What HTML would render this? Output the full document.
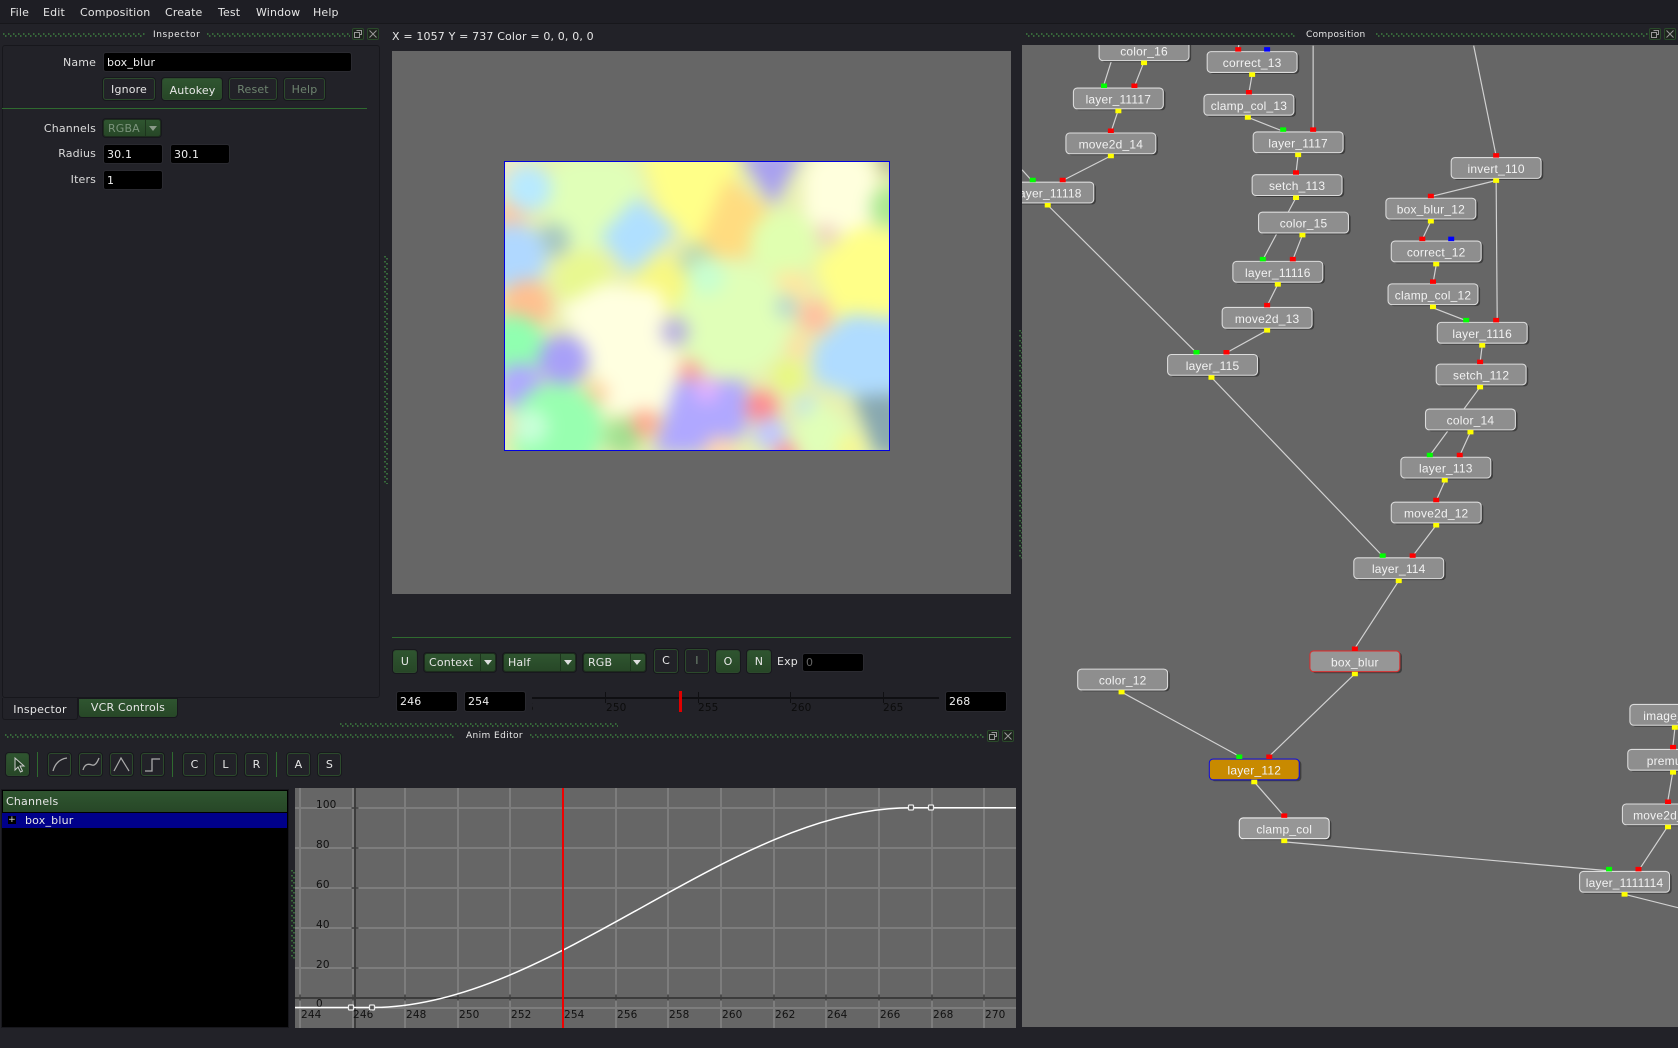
<!DOCTYPE html>
<html><head><meta charset="utf-8"><title>Composition</title>
<style>
html,body{margin:0;padding:0;background:#222228;width:1678px;height:1048px;overflow:hidden}
body{position:relative;font-family:"DejaVu Sans",sans-serif;font-size:11px;color:#e6e6e6;letter-spacing:.15px}
div{box-sizing:border-box}
.a{position:absolute;white-space:nowrap}
.t{position:absolute;white-space:nowrap;line-height:14px}
.r{position:absolute;white-space:nowrap;line-height:14px;text-align:right;width:90px;left:6px;color:#dcdcdc}
.in{position:absolute;background:#000;border:1px solid #2a2a30;border-radius:3px;padding-left:3px;color:#eee;white-space:nowrap}
.b{position:absolute;border:1px solid #2c4a2c;border-radius:3px;text-align:center;background:#222228;box-shadow:0 0 0 1px #18181d;white-space:nowrap}
.g{background:linear-gradient(#2f5530,#274727);color:#e8e8e8}
.c{position:absolute;border-radius:3px;background:linear-gradient(#2f5530,#274727);border:1px solid #1c2c1c;box-shadow:0 0 0 1px #18181d;padding-left:4px;white-space:nowrap}
.c i{position:absolute;top:0;bottom:0;width:1px;background:#1d351d}
.c b{position:absolute;width:0;height:0;border-left:4px solid transparent;border-right:4px solid transparent;border-top:5px solid #ddd}
.d{position:absolute;height:4px;background:linear-gradient(90deg,#37683a 1.500px,transparent 1.500px) 0 0/5px 1.500px repeat-x,linear-gradient(90deg,#37683a 1.500px,transparent 1.500px) 2px 2px/5px 1.500px repeat-x}
.v{position:absolute;width:4px;background:linear-gradient(#37683a 1.500px,transparent 1.500px) 0 0/1.500px 5px repeat-y,linear-gradient(#37683a 1.500px,transparent 1.500px) 2px 2px/1.500px 5px repeat-y}
.ti{position:absolute;font-size:9px;letter-spacing:.4px;line-height:12px;color:#e8e8e8;white-space:nowrap}
.w{position:absolute;width:12px;height:12px;border:1px solid #2a4a2a;border-radius:2px;background:#1d231d}
.w svg{position:absolute;left:0;top:0}
.sp{position:absolute;width:1px;height:25px;background:#2f6a2f}
svg text{font-family:"Liberation Sans",sans-serif}
</style></head><body>

<!-- menu -->
<div class="a" style="left:0;top:0;width:1678px;height:24px;background:#1e1e24;border-bottom:1px solid #17171b"></div>
<div class="t" style="left:10px;top:6px">File</div>
<div class="t" style="left:43px;top:6px">Edit</div>
<div class="t" style="left:80px;top:6px">Composition</div>
<div class="t" style="left:165px;top:6px">Create</div>
<div class="t" style="left:218px;top:6px">Test</div>
<div class="t" style="left:256px;top:6px">Window</div>
<div class="t" style="left:313px;top:6px">Help</div>

<!-- inspector -->
<div class="d" style="left:3px;top:33px;width:142px"></div>
<div class="ti" style="left:153px;top:29px;letter-spacing:.6px">Inspector</div>
<div class="d" style="left:207px;top:33px;width:143px"></div>
<div class="w" style="left:352px;top:28px"><svg width="10" height="10"><path d="M3.500 1.500h5v4h-2M1.500 3.500h5v5h-5z" fill="none" stroke="#999"/></svg></div>
<div class="w" style="left:367px;top:28px"><svg width="10" height="10"><path d="M1.500 1.500l7 7M8.500 1.500l-7 7" fill="none" stroke="#999"/></svg></div>
<div class="a" style="left:2px;top:45px;width:378px;height:653px;border:1px solid #17171c;border-radius:3px"></div>

<div class="r" style="top:56px">Name</div>
<div class="in" style="left:103px;top:52px;width:249px;height:20px;line-height:20px">box_blur</div>
<div class="b" style="left:103px;top:78px;width:52px;height:22px;line-height:22px">Ignore</div>
<div class="b g" style="left:162px;top:78px;width:60px;height:22px;line-height:23px;padding-left:1px">Autokey</div>
<div class="b" style="left:229px;top:78px;width:48px;height:22px;line-height:22px;color:#6f8570">Reset</div>
<div class="b" style="left:284px;top:78px;width:41px;height:22px;line-height:22px;color:#6f8570">Help</div>
<div class="a" style="left:2px;top:108px;width:365px;height:1px;background:#2f6a2f"></div>

<div class="r" style="top:122px">Channels</div>
<div class="c" style="left:103px;top:119px;width:58px;height:18px;line-height:17px;color:#7b947c">RGBA<i style="left:41px"></i><b style="left:45px;top:6px;border-top-color:#8a9a8a"></b></div>
<div class="r" style="top:147px">Radius</div>
<div class="in" style="left:103px;top:144px;width:60px;height:20px;line-height:20px">30.1</div>
<div class="in" style="left:170px;top:144px;width:60px;height:20px;line-height:20px">30.1</div>
<div class="r" style="top:173px">Iters</div>
<div class="in" style="left:103px;top:170px;width:60px;height:20px;line-height:20px">1</div>

<div class="a" style="left:2px;top:698px;width:76px;height:22px;border:1px solid #17171c;border-top:0;border-radius:0 0 3px 3px;text-align:center;line-height:23px;letter-spacing:.25px">Inspector</div>
<div class="a" style="left:79px;top:699px;width:98px;height:18px;background:linear-gradient(#2f5530,#274727);border-radius:0 0 3px 3px;text-align:center;line-height:18px;letter-spacing:.2px;box-shadow:0 0 0 1px #18181d">VCR Controls</div>

<div class="v" style="left:384px;top:256px;height:228px"></div>
<div class="v" style="left:1019px;top:330px;height:230px"></div>
<div class="d" style="left:340px;top:723px;width:278px"></div>

<!-- viewer -->
<div class="t" style="left:392px;top:30px">X = 1057 Y = 737 Color = 0, 0, 0, 0</div>
<div class="a" style="left:392px;top:51px;width:619px;height:543px;background:#666"></div>
<svg class="a" style="left:504px;top:161px;border:0" width="386" height="290" viewBox="42 33 1158 870">
<defs><filter id="bl" x="-10%" y="-10%" width="120%" height="120%" color-interpolation-filters="sRGB"><feGaussianBlur stdDeviation="26"/></filter></defs>
<g filter="url(#bl)">
<rect x="-50" y="-50" width="1350" height="1050" fill="#e8f0b0"/>
<circle cx="60" cy="60" r="70" fill="#f0e8c0"/>
<circle cx="60" cy="200" r="50" fill="#ffc8a0"/>
<rect x="170" y="20" width="290" height="280" rx="100" fill="#e0ffb8"/>
<circle cx="115" cy="115" r="70" fill="#b8eaff"/>
<path d="M450 0H750L730 150L630 290L510 180Z" fill="#ffff88"/>
<path d="M710 80L850 190L770 320H630L630 270Z" fill="#ffdc80"/>
<path d="M740 0H940L850 170Z" fill="#a8a0f0"/>
<rect x="940" y="0" width="220" height="250" rx="90" fill="#ffffdd"/>
<circle cx="1200" cy="170" r="60" fill="#aae890"/>
<path d="M1160 0H1230V70H1180Z" fill="#b0b090"/>
<path d="M330 260L440 140L560 240L420 370Z" fill="#b0e0ff"/>
<circle cx="620" cy="330" r="50" fill="#bcd8b0"/>
<circle cx="190" cy="270" r="50" fill="#a8c8c0"/>
<circle cx="70" cy="320" r="100" fill="#b0d8ff"/>
<circle cx="880" cy="280" r="100" fill="#e0ffb0"/>
<circle cx="1010" cy="250" r="30" fill="#f0d0c0"/>
<path d="M970 350L1100 230L1240 250V500H1040Z" fill="#ffff88"/>
<circle cx="900" cy="420" r="60" fill="#ffe8a0"/>
<circle cx="110" cy="465" r="75" fill="#ffc090"/>
<circle cx="280" cy="390" r="85" fill="#e8f890"/>
<path d="M390 420L530 310L600 400L520 510L420 530Z" fill="#f8f880"/>
<circle cx="730" cy="510" r="170" fill="#e0ffb8"/>
<circle cx="650" cy="380" r="55" fill="#c8ffd0"/>
<circle cx="890" cy="470" r="35" fill="#b8d8d0"/>
<circle cx="975" cy="500" r="50" fill="#ffc0a0"/>
<circle cx="925" cy="590" r="35" fill="#ffe0a0"/>
<path d="M210 470L340 400L510 420L570 640L530 790L340 790L300 640Z" fill="#ffffe0"/>
<circle cx="555" cy="545" r="42" fill="#b8b0e0"/>
<circle cx="600" cy="665" r="32" fill="#ff9898"/>
<circle cx="70" cy="590" r="95" fill="#90ffb0"/>
<circle cx="220" cy="630" r="75" fill="#a8a0f8"/>
<circle cx="90" cy="710" r="70" fill="#b0a8ff"/>
<circle cx="320" cy="730" r="35" fill="#ffd0a0"/>
<circle cx="200" cy="840" r="140" fill="#98ffb0"/>
<circle cx="120" cy="830" r="55" fill="#c8ffd8"/>
<circle cx="40" cy="830" r="35" fill="#f0e0b0"/>
<circle cx="400" cy="860" r="55" fill="#a0e090"/>
<circle cx="465" cy="820" r="42" fill="#ffa890"/>
<path d="M560 690H770V850L640 910H490Z" fill="#b0a8ff"/>
<circle cx="650" cy="720" r="40" fill="#e0b0ff"/>
<circle cx="815" cy="770" r="48" fill="#ff8890"/>
<circle cx="690" cy="910" r="50" fill="#ffd8b0"/>
<circle cx="840" cy="850" r="50" fill="#c0c8ff"/>
<circle cx="890" cy="915" r="35" fill="#ff8898"/>
<circle cx="895" cy="680" r="48" fill="#e8f880"/>
<circle cx="950" cy="770" r="40" fill="#c8e8e0"/>
<path d="M970 590L1080 490L1240 510V740L1100 740L970 690Z" fill="#b0dcff"/>
<path d="M1090 740L1240 730V920H1160Z" fill="#88a8b0"/>
<path d="M910 840L990 750L1100 850L1140 930H920Z" fill="#e0ffb8"/>
<circle cx="1080" cy="895" r="40" fill="#f8f890"/>
</g>
</svg>
<div class="a" style="left:504px;top:161px;width:386px;height:290px;border:1px solid #0000e0"></div>

<!-- viewer controls -->
<div class="a" style="left:392px;top:637px;width:619px;height:1px;background:#2f6a2f"></div>
<div class="b g" style="left:393px;top:650px;width:24px;height:23px;line-height:22px">U</div>
<div class="c" style="left:424px;top:653px;width:72px;height:19px;line-height:18px">Context<i style="left:55px"></i><b style="left:59px;top:6px"></b></div>
<div class="c" style="left:503px;top:653px;width:73px;height:19px;line-height:18px">Half<i style="left:56px"></i><b style="left:60px;top:6px"></b></div>
<div class="c" style="left:583px;top:653px;width:63px;height:19px;line-height:18px">RGB<i style="left:46px"></i><b style="left:49px;top:6px"></b></div>
<div class="b" style="left:654px;top:649px;width:24px;height:24px;line-height:21px">C</div>
<div class="b" style="left:685px;top:649px;width:24px;height:24px;line-height:22px;color:#6f8570">I</div>
<div class="b g" style="left:716px;top:650px;width:24px;height:23px;line-height:22px">O</div>
<div class="b g" style="left:747px;top:650px;width:24px;height:23px;line-height:22px">N</div>
<div class="t" style="left:777px;top:655px">Exp</div>
<div class="in" style="left:802px;top:653px;width:62px;height:19px;line-height:18px;color:#666">0</div>

<div class="in" style="left:396px;top:691px;width:62px;height:21px;line-height:20px">246</div>
<div class="in" style="left:464px;top:691px;width:62px;height:21px;line-height:20px">254</div>
<div class="in" style="left:945px;top:691px;width:62px;height:21px;line-height:20px">268</div>
<div class="a" style="left:532px;top:681px;width:408px;height:40px;overflow:hidden">
  <div class="a" style="left:0;top:16px;width:407px;height:2px;background:#0f0f12"></div>
  <div class="a" style="left:73px;top:11px;width:1px;height:11px;background:#0f0f12"></div>
  <div class="a" style="left:166px;top:11px;width:1px;height:11px;background:#0f0f12"></div>
  <div class="a" style="left:258px;top:11px;width:1px;height:11px;background:#0f0f12"></div>
  <div class="a" style="left:351px;top:11px;width:1px;height:11px;background:#0f0f12"></div>
  <div class="t" style="left:-5px;top:20px;color:#0c0c0c;font-size:10.500px">5</div>
  <div class="t" style="left:74px;top:20px;color:#0c0c0c;font-size:10.500px">250</div>
  <div class="t" style="left:166px;top:20px;color:#0c0c0c;font-size:10.500px">255</div>
  <div class="t" style="left:259px;top:20px;color:#0c0c0c;font-size:10.500px">260</div>
  <div class="t" style="left:351px;top:20px;color:#0c0c0c;font-size:10.500px">265</div>
</div>
<div class="a" style="left:679px;top:691px;width:3px;height:21px;background:#e00000"></div>

<!-- anim editor header -->
<div class="d" style="left:5px;top:734px;width:450px"></div>
<div class="ti" style="left:466px;top:730px">Anim Editor</div>
<div class="d" style="left:530px;top:734px;width:455px"></div>
<div class="w" style="left:987px;top:730px"><svg width="10" height="10"><path d="M3.500 1.500h5v4h-2M1.500 3.500h5v5h-5z" fill="none" stroke="#999"/></svg></div>
<div class="w" style="left:1002px;top:730px"><svg width="10" height="10"><path d="M1.500 1.500l7 7M8.500 1.500l-7 7" fill="none" stroke="#999"/></svg></div>

<!-- anim toolbar -->
<div class="b g" style="left:6px;top:753px;width:23px;height:23px"><svg width="21" height="21" style="position:absolute;left:0;top:0"><path d="M8 4v12l3-3 2.500 5 2-1-2.500-5h4z" fill="#1e3a20" stroke="#ccc"/></svg></div>
<div class="sp" style="left:37px;top:752px"></div>
<div class="b" style="left:48px;top:753px;width:23px;height:23px"><svg width="21" height="21" style="position:absolute;left:0;top:0"><path d="M4 17C6 10 10 5 18 4" fill="none" stroke="#aaa" stroke-width="1.300"/></svg></div>
<div class="b" style="left:79px;top:753px;width:23px;height:23px"><svg width="21" height="21" style="position:absolute;left:0;top:0"><path d="M3 16C5 9 9 10 12 11S17 9 19 4" fill="none" stroke="#aaa" stroke-width="1.300"/></svg></div>
<div class="b" style="left:110px;top:753px;width:23px;height:23px"><svg width="21" height="21" style="position:absolute;left:0;top:0"><path d="M3 17L10 4L18 17" fill="none" stroke="#aaa" stroke-width="1.200"/></svg></div>
<div class="b" style="left:141px;top:753px;width:23px;height:23px"><svg width="21" height="21" style="position:absolute;left:0;top:0"><path d="M3 17H10V5H18" fill="none" stroke="#aaa" stroke-width="1.300"/></svg></div>
<div class="sp" style="left:172px;top:752px"></div>
<div class="b" style="left:183px;top:753px;width:23px;height:23px;line-height:21px">C</div>
<div class="b" style="left:214px;top:753px;width:23px;height:23px;line-height:21px">L</div>
<div class="b" style="left:245px;top:753px;width:23px;height:23px;line-height:21px">R</div>
<div class="sp" style="left:276px;top:752px"></div>
<div class="b" style="left:287px;top:753px;width:23px;height:23px;line-height:21px">A</div>
<div class="b" style="left:318px;top:753px;width:23px;height:23px;line-height:21px">S</div>

<!-- channels -->
<div class="a" style="left:2px;top:790px;width:286px;height:237px;background:#000;box-shadow:0 0 0 1px #17171c"></div>
<div class="a" style="left:3px;top:791px;width:284px;height:21px;background:linear-gradient(#2f5530,#274727);line-height:21px;padding-left:3px;letter-spacing:.2px">Channels</div>
<div class="a" style="left:2px;top:813px;width:285px;height:15px;background:#00008a;line-height:15px;padding-left:23px;letter-spacing:.2px">box_blur</div>
<div class="a" style="left:8px;top:816px;width:8px;height:8px;background:#000;color:#ddd;font-size:9px;line-height:8px;text-align:center">+</div>
<div class="v" style="left:291px;top:870px;height:90px"></div>

<!-- graph -->
<svg class="a" style="left:295px;top:788px" width="721" height="240" viewBox="295 788 721 240">
<rect x="295" y="788" width="721" height="240" fill="#666"/>
<path d="M300 788V1028M353 788V1028M405 788V1028M458 788V1028M510 788V1028M563 788V1028M616 788V1028M668 788V1028M721 788V1028M774 788V1028M826 788V1028M879 788V1028M932 788V1028M984 788V1028M295 808H1016M295 848H1016M295 888H1016M295 928H1016M295 968H1016M295 1008H1016" stroke="#7d7d7d" stroke-width="2" fill="none"/>
<path d="M295 998H1016M355 788V1028" stroke="#3c3c3c" stroke-width="2" fill="none"/>
<path d="M351.500 808h7M351.500 848h7M351.500 888h7M351.500 928h7M351.500 968h7M300 994.500v6M353 994.500v6M405 994.500v6M458 994.500v6M510 994.500v6M563 994.500v6M616 994.500v6M668 994.500v6M721 994.500v6M774 994.500v6M826 994.500v6M879 994.500v6M932 994.500v6M984 994.500v6" stroke="#3c3c3c" stroke-width="1.500" fill="none"/>
<g font-size="10.500" fill="#111">
<text x="316" y="808" style="font-family:'DejaVu Sans',sans-serif">100</text>
<text x="316" y="848" style="font-family:'DejaVu Sans',sans-serif">80</text>
<text x="316" y="888" style="font-family:'DejaVu Sans',sans-serif">60</text>
<text x="316" y="928" style="font-family:'DejaVu Sans',sans-serif">40</text>
<text x="316" y="968" style="font-family:'DejaVu Sans',sans-serif">20</text>
<text x="316" y="1007" style="font-family:'DejaVu Sans',sans-serif">0</text>
<text x="301" y="1018" style="font-family:'DejaVu Sans',sans-serif">244</text>
<text x="353" y="1018" style="font-family:'DejaVu Sans',sans-serif">246</text>
<text x="406" y="1018" style="font-family:'DejaVu Sans',sans-serif">248</text>
<text x="459" y="1018" style="font-family:'DejaVu Sans',sans-serif">250</text>
<text x="511" y="1018" style="font-family:'DejaVu Sans',sans-serif">252</text>
<text x="564" y="1018" style="font-family:'DejaVu Sans',sans-serif">254</text>
<text x="617" y="1018" style="font-family:'DejaVu Sans',sans-serif">256</text>
<text x="669" y="1018" style="font-family:'DejaVu Sans',sans-serif">258</text>
<text x="722" y="1018" style="font-family:'DejaVu Sans',sans-serif">260</text>
<text x="775" y="1018" style="font-family:'DejaVu Sans',sans-serif">262</text>
<text x="827" y="1018" style="font-family:'DejaVu Sans',sans-serif">264</text>
<text x="880" y="1018" style="font-family:'DejaVu Sans',sans-serif">266</text>
<text x="933" y="1018" style="font-family:'DejaVu Sans',sans-serif">268</text>
<text x="985" y="1018" style="font-family:'DejaVu Sans',sans-serif">270</text>
</g>
<path d="M295 1007.500H372C552 1007.500 731 807.700 911 807.700H1016" fill="none" stroke="#fff" stroke-width="1.500"/>
<rect x="562" y="788" width="2" height="240" fill="#f00000"/>
<g fill="#555" stroke="#e8e8e8" stroke-width="1.300">
<rect x="348.500" y="1005" width="5" height="5" rx="1"/>
<rect x="369.500" y="1005" width="5" height="5" rx="1"/>
<rect x="908.500" y="805" width="5" height="5" rx="1"/>
<rect x="928.500" y="805" width="5" height="5" rx="1"/>
</g>
</svg>

<!-- composition -->
<div class="d" style="left:1026px;top:33px;width:269px"></div>
<div class="ti" style="left:1306px;top:29px;letter-spacing:.3px">Composition</div>
<div class="d" style="left:1376px;top:33px;width:272px"></div>
<div class="w" style="left:1649px;top:28px"><svg width="10" height="10"><path d="M3.500 1.500h5v4h-2M1.500 3.500h5v5h-5z" fill="none" stroke="#999"/></svg></div>
<div class="w" style="left:1664px;top:28px"><svg width="10" height="10"><path d="M1.500 1.500l7 7M8.500 1.500l-7 7" fill="none" stroke="#999"/></svg></div>

<div class="a" style="left:1022px;top:45px;width:656px;height:982px;background:#666;overflow:hidden">
<svg width="656" height="982" style="position:absolute;left:0;top:0">
<defs>
<rect id="s" width="84" height="19.400" rx="3.500" fill="#3e3e3e"/>
</defs>
<g transform="translate(-1022,-44.300) scale(1.0702)">
<path fill="none" stroke="#d2d2d2" stroke-width="1.100" d="M1069 57L1060 80M1050 20L1031 80M1045 102L1038 123M1038 145L993 168M955 158L964 168M979 191L1118 329M1158 38L1157 45M1170 69L1167 86M1166 109L1199 122M1227 42V122M1213 144L1211 161M1211 184L1180 242M1217 219L1208 242M1194 265L1184 285M1184 308L1146 329M1132 352L1292 519M1377 42L1398 145M1398 168L1399 299M1398 168L1337 183M1337 206L1329 223M1342 247L1339 264M1339 287L1370 299M1385 322L1383 338M1383 361L1336 425M1374 403L1364 425M1350 449L1342 467M1342 490L1320 519M1307 542L1266 605M1266 629L1186 706M1048 646L1158 706M1172 730L1200 762M1200 786L1503 813M1558 772L1531 813M1518 835L1570 848M1565 680L1563 698M1563 721L1558 750"/>

<g>
<use href="#s" x="1029" y="38"/><use href="#s" x="1130" y="49"/><use href="#s" x="1127" y="89"/><use href="#s" x="1005" y="83"/><use href="#s" x="998" y="125"/><use href="#s" x="1173" y="124"/><use href="#s" x="940" y="171"/><use href="#s" x="1172" y="164"/><use href="#s" x="1178" y="199"/><use href="#s" x="1154" y="245"/><use href="#s" x="1144" y="288"/><use href="#s" x="1093" y="332"/><use href="#s" x="1358" y="148"/><use href="#s" x="1297" y="186"/><use href="#s" x="1302" y="226"/><use href="#s" x="1299" y="266"/><use href="#s" x="1345" y="302"/><use href="#s" x="1344" y="341"/><use href="#s" x="1334" y="383"/><use href="#s" x="1311" y="428"/><use href="#s" x="1302" y="470"/><use href="#s" x="1267" y="522"/><use href="#s" x="1226" y="609"/><use href="#s" x="1009" y="626"/><use href="#s" x="1132" y="710"/><use href="#s" x="1160" y="765"/><use href="#s" x="1478" y="815"/><use href="#s" x="1525" y="659"/><use href="#s" x="1523" y="701"/><use href="#s" x="1518" y="752"/>
</g>
<g fill="#8e8e8e" stroke="#dcdcdc" stroke-width="1">
<rect x="1027" y="36.600" width="84" height="19.400" rx="3.500"/>
<rect x="1128" y="47.600" width="84" height="19.400" rx="3.500"/>
<rect x="1125" y="87.600" width="84" height="19.400" rx="3.500"/>
<rect x="1003" y="81.600" width="84" height="19.400" rx="3.500"/>
<rect x="996" y="123.600" width="84" height="19.400" rx="3.500"/>
<rect x="1171" y="122.600" width="84" height="19.400" rx="3.500"/>
<rect x="938" y="169.600" width="84" height="19.400" rx="3.500"/>
<rect x="1170" y="162.600" width="84" height="19.400" rx="3.500"/>
<rect x="1176" y="197.600" width="84" height="19.400" rx="3.500"/>
<rect x="1152" y="243.600" width="84" height="19.400" rx="3.500"/>
<rect x="1142" y="286.600" width="84" height="19.400" rx="3.500"/>
<rect x="1091" y="330.600" width="84" height="19.400" rx="3.500"/>
<rect x="1356" y="146.600" width="84" height="19.400" rx="3.500"/>
<rect x="1295" y="184.600" width="84" height="19.400" rx="3.500"/>
<rect x="1300" y="224.600" width="84" height="19.400" rx="3.500"/>
<rect x="1297" y="264.600" width="84" height="19.400" rx="3.500"/>
<rect x="1343" y="300.600" width="84" height="19.400" rx="3.500"/>
<rect x="1342" y="339.600" width="84" height="19.400" rx="3.500"/>
<rect x="1332" y="381.600" width="84" height="19.400" rx="3.500"/>
<rect x="1309" y="426.600" width="84" height="19.400" rx="3.500"/>
<rect x="1300" y="468.600" width="84" height="19.400" rx="3.500"/>
<rect x="1265" y="520.600" width="84" height="19.400" rx="3.500"/>
<rect x="1007" y="624.600" width="84" height="19.400" rx="3.500"/>
<rect x="1158" y="763.600" width="84" height="19.400" rx="3.500" fill="#969696" stroke="#f0f0f0"/>
<rect x="1476" y="813.600" width="84" height="19.400" rx="3.500"/>
<rect x="1523" y="657.600" width="84" height="19.400" rx="3.500"/>
<rect x="1521" y="699.600" width="84" height="19.400" rx="3.500"/>
<rect x="1516" y="750.600" width="84" height="19.400" rx="3.500"/>
<rect x="1224" y="607.600" width="84" height="19.400" rx="3.500" fill="#969696" stroke="#d83030"/>
<rect x="1130" y="708.600" width="84" height="19.400" rx="3.500" fill="#c88a00" stroke="#1010e0"/>
</g>
<path fill="#ff0" d="M1066.200 56h5.600v4.200h-5.600zM1167.200 67h5.600v4.200h-5.600zM1163.200 107h5.600v4.200h-5.600zM1042.200 101h5.600v4.200h-5.600zM1035.200 143h5.600v4.200h-5.600zM976.200 189h5.600v4.200h-5.600zM1210.200 142h5.600v4.200h-5.600zM1208.200 182h5.600v4.200h-5.600zM1214.200 217h5.600v4.200h-5.600zM1191.200 263h5.600v4.200h-5.600zM1181.200 306h5.600v4.200h-5.600zM1129.200 350h5.600v4.200h-5.600zM1395.200 166h5.600v4.200h-5.600zM1334.200 204h5.600v4.200h-5.600zM1339.200 244h5.600v4.200h-5.600zM1336.200 284h5.600v4.200h-5.600zM1382.200 320h5.600v4.200h-5.600zM1380.200 359h5.600v4.200h-5.600zM1371.200 401h5.600v4.200h-5.600zM1347.200 446h5.600v4.200h-5.600zM1339.200 488h5.600v4.200h-5.600zM1304.200 540h5.600v4.200h-5.600zM1263.200 627h5.600v4.200h-5.600zM1045.200 644h5.600v4.200h-5.600zM1169.200 728h5.600v4.200h-5.600zM1197.200 783h5.600v4.200h-5.600zM1515.200 833h5.600v4.200h-5.600zM1562.200 677h5.600v4.200h-5.600zM1560.500 719h5.600v4.200h-5.600zM1555.800 770h5.600v4.200h-5.600z"/>
<path fill="#f00" d="M1057.200 77.400h5.600v4.200h-5.600zM1035.200 119.400h5.600v4.200h-5.600zM990.200 165.400h5.600v4.200h-5.600zM1154.200 43.400h5.600v4.200h-5.600zM1164.200 83.400h5.600v4.200h-5.600zM1224.200 118.400h5.600v4.200h-5.600zM1208.200 158.400h5.600v4.200h-5.600zM1205.200 239.400h5.600v4.200h-5.600zM1181.200 282.400h5.600v4.200h-5.600zM1143.200 326.400h5.600v4.200h-5.600zM1395.200 142.400h5.600v4.200h-5.600zM1334.200 180.400h5.600v4.200h-5.600zM1326.200 220.400h5.600v4.200h-5.600zM1336.200 260.400h5.600v4.200h-5.600zM1395.200 296.400h5.600v4.200h-5.600zM1380.200 335.400h5.600v4.200h-5.600zM1361.200 422.400h5.600v4.200h-5.600zM1339.200 464.400h5.600v4.200h-5.600zM1317.200 516.400h5.600v4.200h-5.600zM1263.200 603.400h5.600v4.200h-5.600zM1183.200 704.400h5.600v4.200h-5.600zM1197.200 759.400h5.600v4.200h-5.600zM1528.200 809.400h5.600v4.200h-5.600zM1560.500 695.400h5.600v4.200h-5.600zM1555.800 746.400h5.600v4.200h-5.600z"/>
<path fill="#0f0" d="M1028.800 77.400h5.600v4.200h-5.600zM962.200 165.400h5.600v4.200h-5.600zM1196.200 118.400h5.600v4.200h-5.600zM1177.200 239.400h5.600v4.200h-5.600zM1115.200 326.400h5.600v4.200h-5.600zM1367.200 296.400h5.600v4.200h-5.600zM1333.200 422.400h5.600v4.200h-5.600zM1289.200 516.400h5.600v4.200h-5.600zM1155.200 704.400h5.600v4.200h-5.600zM1500.700 809.400h5.600v4.200h-5.600z"/>
<path fill="#00f" d="M1181.200 43.400h5.600v4.200h-5.600zM1353.200 220.400h5.600v4.200h-5.600z"/>
<g font-size="11.200" fill="#f2f2f2" text-anchor="middle" letter-spacing=".2">
<text x="1069" y="51">color_16</text>
<text x="1170" y="62">correct_13</text>
<text x="1167" y="102">clamp_col_13</text>
<text x="1045" y="96">layer_11117</text>
<text x="1038" y="138">move2d_14</text>
<text x="1213" y="137">layer_1117</text>
<text x="980" y="184">layer_11118</text>
<text x="1212" y="177">setch_113</text>
<text x="1218" y="212">color_15</text>
<text x="1194" y="258">layer_11116</text>
<text x="1184" y="301">move2d_13</text>
<text x="1133" y="345">layer_115</text>
<text x="1398" y="161">invert_110</text>
<text x="1337" y="199">box_blur_12</text>
<text x="1342" y="239">correct_12</text>
<text x="1339" y="279">clamp_col_12</text>
<text x="1385" y="315">layer_1116</text>
<text x="1384" y="354">setch_112</text>
<text x="1374" y="396">color_14</text>
<text x="1351" y="441">layer_113</text>
<text x="1342" y="483">move2d_12</text>
<text x="1307" y="535">layer_114</text>
<text x="1266" y="622">box_blur</text>
<text x="1049" y="639">color_12</text>
<text x="1172" y="723">layer_112</text>
<text x="1200" y="778">clamp_col</text>
<text x="1518" y="828">layer_1111114</text>
<text x="1535.500" y="672" text-anchor="start">image_11</text>
<text x="1538.700" y="714" text-anchor="start">premult_1</text>
<text x="1526" y="765" text-anchor="start">move2d_11</text>
</g>
</g>
</svg>
</div>
</body></html>
